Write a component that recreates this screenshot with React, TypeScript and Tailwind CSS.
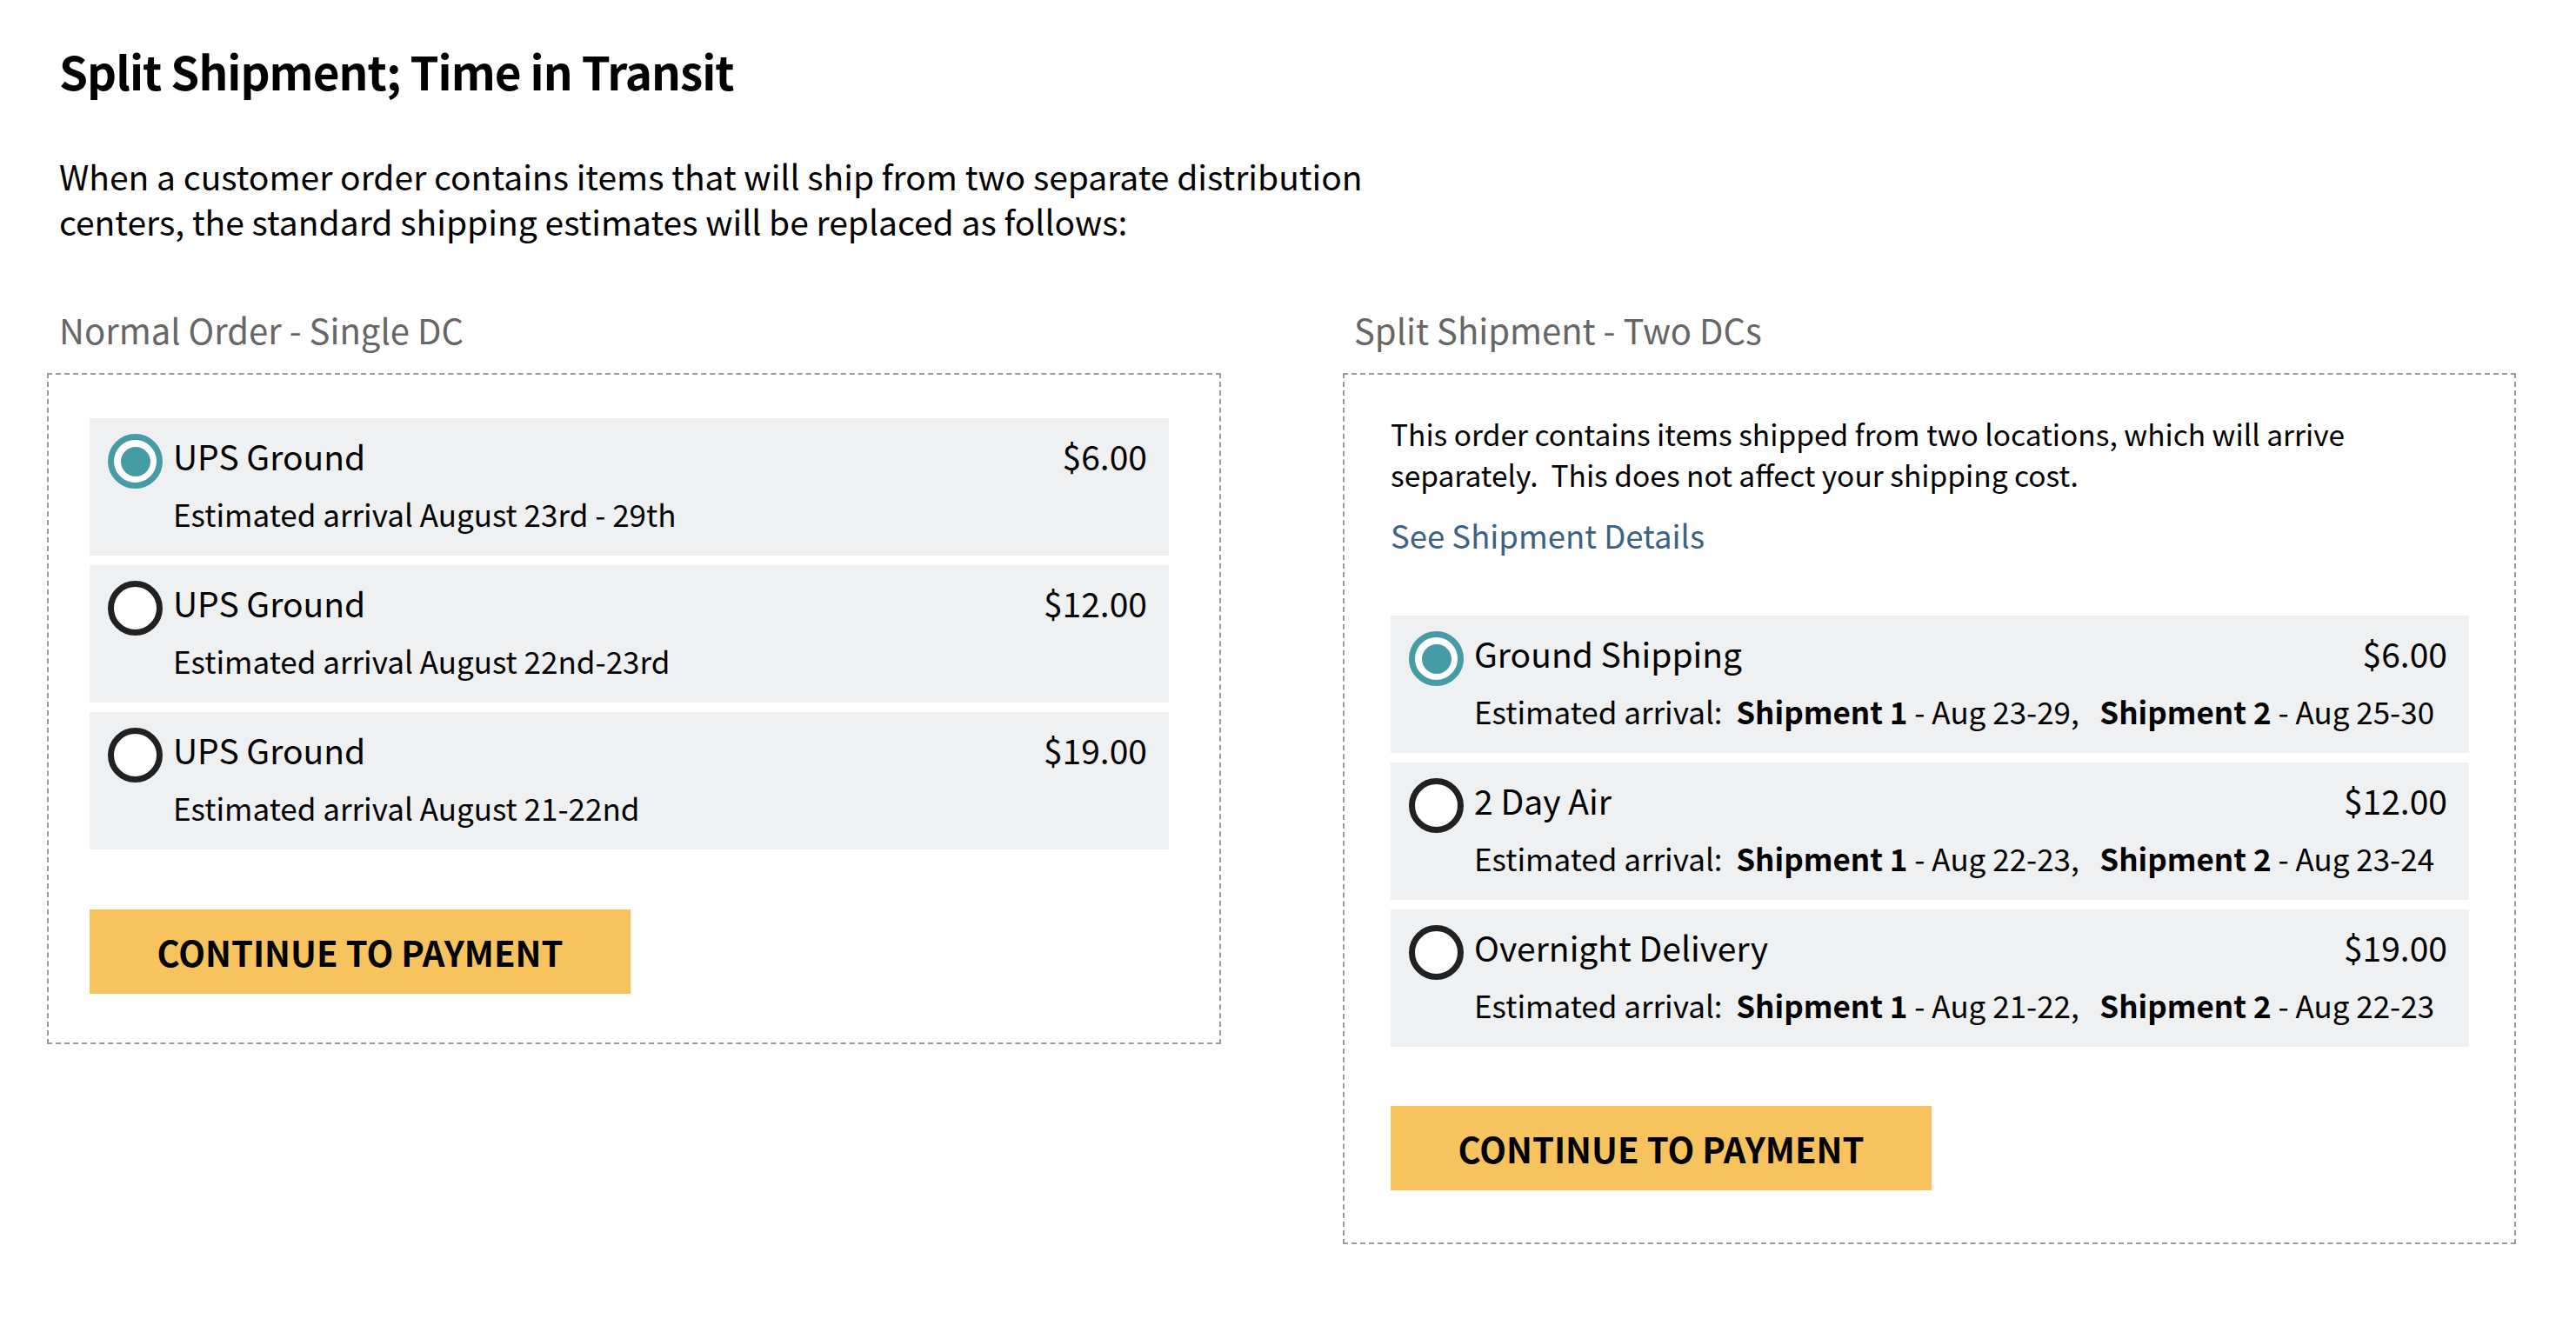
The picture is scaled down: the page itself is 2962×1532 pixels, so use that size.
import React from "react";

type Option = {
  name: string;
  price: string;
  selected?: boolean;
  arrival: React.ReactNode;
};

const singleOptions: Option[] = [
  { name: "UPS Ground", price: "$6.00", selected: true, arrival: "Estimated arrival August 23rd - 29th" },
  { name: "UPS Ground", price: "$12.00", arrival: "Estimated arrival August 22nd-23rd" },
  { name: "UPS Ground", price: "$19.00", arrival: "Estimated arrival August 21-22nd" },
];

function splitArrival(first: string, second: string) {
  return (
    <span className="whitespace-pre">
      {"Estimated arrival:  "}
      <b className="font-bold">Shipment 1</b>
      {` - ${first},   `}
      <b className="font-bold">Shipment 2</b>
      {` - ${second}`}
    </span>
  );
}

const splitOptions: Option[] = [
  { name: "Ground Shipping", price: "$6.00", selected: true, arrival: splitArrival("Aug 23-29", "Aug 25-30") },
  { name: "2 Day Air", price: "$12.00", arrival: splitArrival("Aug 22-23", "Aug 23-24") },
  { name: "Overnight Delivery", price: "$19.00", arrival: splitArrival("Aug 21-22", "Aug 22-23") },
];

function Radio({ selected }: { selected?: boolean }) {
  return (
    <span
      className={`flex h-[63px] w-[63px] shrink-0 items-center justify-center rounded-full border-[7px] bg-white ${
        selected ? "border-[#459ca4]" : "border-[#1f2123]"
      }`}
    >
      {selected && <span className="h-[34px] w-[34px] rounded-full bg-[#459ca4]" />}
    </span>
  );
}

function OptionRow({ option }: { option: Option }) {
  return (
    <div className="flex h-[158px] items-start bg-[#eff0f2] pl-[21px] pr-[25px] pt-[18px]">
      <Radio selected={option.selected} />
      <div className="ml-[12px] flex-1">
        <div className="flex items-start justify-between text-[39px] leading-[50px]">
          <span>{option.name}</span>
          <span>{option.price}</span>
        </div>
        <div className="mt-[20px] text-[35px] leading-[44px]">{option.arrival}</div>
      </div>
    </div>
  );
}

function PayButton() {
  return (
    <button
      className="flex h-[97px] w-[622px] items-center justify-center bg-[#f6c35f] text-[40px] font-semibold leading-none text-black"
      type="button"
    >
      CONTINUE TO PAYMENT
    </button>
  );
}

export default function App() {
  return (
    <div className="min-h-screen bg-white font-['Noto_Sans_CJK_KR',sans-serif] text-black">
      <div className="pl-[68px] pt-[46px]">
        <h1 className="text-[53px] font-bold leading-[70px] tracking-[-1px]">Split Shipment; Time in Transit</h1>
        <p className="mt-[60px] text-[39px] leading-[52px]">
          When a customer order contains items that will ship from two separate distribution
          <br />
          centers, the standard shipping estimates will be replaced as follows:
        </p>
      </div>

      <div className="mt-[74px] grid grid-cols-[1350px_1349px] items-start gap-x-[140px] pl-[54px]">
        <section>
          <h2 className="pl-[14px] text-[40px] leading-[50px] text-[#666]">Normal Order - Single DC</h2>
          <div className="mt-[25px] border-2 border-dashed border-[#9a9a9a] pb-[56px] pl-[47px] pr-[58px] pt-[50px]">
            <div className="flex flex-col gap-[11px]">
              {singleOptions.map((option, i) => (
                <OptionRow key={i} option={option} />
              ))}
            </div>
            <div className="mt-[69px]">
              <PayButton />
            </div>
          </div>
        </section>

        <section>
          <h2 className="pl-[13px] text-[40px] leading-[50px] text-[#666]">Split Shipment - Two DCs</h2>
          <div className="mt-[25px] border-2 border-dashed border-[#9a9a9a] pb-[60px] pl-[53px] pr-[52px] pt-[44px]">
            <p className="text-[33.5px] leading-[47px]">
              This order contains items shipped from two locations, which will arrive
              <br />
              <span className="whitespace-pre">separately.  This does not affect your shipping cost.</span>
            </p>
            <a className="mt-[23px] block text-[36.5px] leading-[48px] text-[#3b6286]" href="#">
              See Shipment Details
            </a>
            <div className="mt-[68px] flex flex-col gap-[11px]">
              {splitOptions.map((option, i) => (
                <OptionRow key={i} option={option} />
              ))}
            </div>
            <div className="mt-[68px]">
              <PayButton />
            </div>
          </div>
        </section>
      </div>
    </div>
  );
}
